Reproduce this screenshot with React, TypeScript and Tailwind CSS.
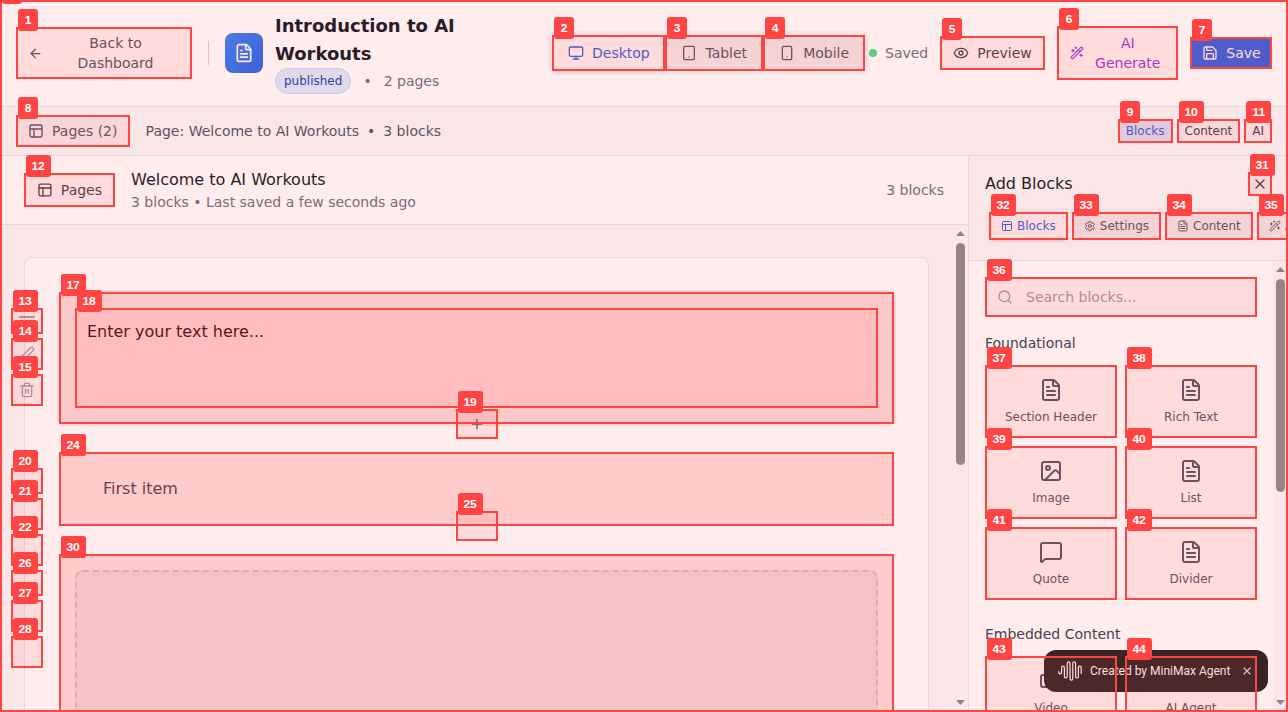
import type { ReactNode } from "react";
import {
  ArrowLeft,
  Bot,
  Eye,
  FileText,
  Image,
  MessageSquare,
  Monitor,
  PanelsTopLeft,
  Pen,
  Plus,
  Save,
  Search,
  Settings,
  Smartphone,
  Tablet,
  Trash2,
  Video,
  WandSparkles,
  X,
} from "lucide-react";

type Mark = [id: number, x: number, y: number, w: number, h: number];

const marks: Mark[] = [
  [0, 0, 0, 1288, 712],
  [1, 16, 27, 176, 52],
  [2, 552, 35, 113, 36],
  [3, 665, 35, 98, 36],
  [4, 763, 35, 102, 36],
  [5, 940, 36, 105, 34],
  [6, 1057, 26, 121, 54],
  [7, 1190, 37, 82, 32],
  [8, 16, 115, 114, 32],
  [9, 1118, 119, 55, 24],
  [10, 1177, 119, 63, 24],
  [11, 1244, 119, 28, 24],
  [12, 24, 173, 91, 34],
  [13, 11, 308, 32, 26],
  [14, 11, 338, 32, 32],
  [15, 11, 374, 32, 32],
  [16, 59, 292, 835, 132],
  [17, 59, 292, 835, 132],
  [18, 75, 308, 803, 100],
  [19, 456, 409, 42, 30],
  [20, 11, 468, 32, 26],
  [21, 11, 498, 32, 32],
  [22, 11, 534, 32, 32],
  [23, 59, 452, 835, 74],
  [24, 59, 452, 835, 74],
  [25, 456, 511, 42, 30],
  [26, 11, 570, 32, 26],
  [27, 11, 600, 32, 32],
  [28, 11, 636, 32, 32],
  [29, 59, 554, 835, 234],
  [30, 59, 554, 835, 234],
  [31, 1248, 172, 24, 24],
  [32, 989, 212, 79, 28],
  [33, 1072, 212, 89, 28],
  [34, 1165, 212, 88, 28],
  [35, 1257, 212, 52, 28],
  [36, 985, 277, 272, 40],
  [37, 985, 365, 132, 73],
  [38, 1125, 365, 132, 73],
  [39, 985, 446, 132, 73],
  [40, 1125, 446, 132, 73],
  [41, 985, 527, 132, 73],
  [42, 1125, 527, 132, 73],
  [43, 985, 656, 132, 73],
  [44, 1125, 656, 132, 73],
];

function Marks() {
  return (
    <div className="pointer-events-none absolute inset-0 z-20 overflow-hidden">
      {marks.map(([id, x, y, w, h]) => (
        <div
          key={id}
          className="absolute border-2 border-[#ff4444] bg-[#ff4444]/10"
          style={{ left: x, top: y, width: w, height: h }}
        >
          <span
            className={`absolute -top-5 left-0 flex h-[22px] items-center justify-center rounded-[3px] bg-[#ff4444] font-['Liberation_Sans',sans-serif] text-[11px] font-bold text-white ${id < 10 ? "w-5" : "w-[25px]"}`}
          >
            <span className="scale-x-110">{id}</span>
          </span>
        </div>
      ))}
    </div>
  );
}

function ScrollTrack({ thumb }: { thumb: string }) {
  return (
    <div className="flex w-[15px] shrink-0 flex-col items-center bg-[#fafafa]">
      <svg className="mt-1.5 shrink-0" width="9" height="5" viewBox="0 0 9 5">
        <path d="M0 5 4.5 0 9 5Z" fill="#8b8b8b" />
      </svg>
      <div className={`mt-[7px] w-[9px] shrink-0 rounded-full bg-[#8b8b8b] ${thumb}`} />
      <svg className="mt-auto mb-[7px] shrink-0" width="9" height="5" viewBox="0 0 9 5">
        <path d="M0 0 4.5 5 9 0Z" fill="#8b8b8b" />
      </svg>
    </div>
  );
}

function Header() {
  return (
    <header className="flex h-[107px] shrink-0 items-center border-b border-gray-200 bg-white px-4">
      <button className="flex w-44 shrink-0 items-center px-3 text-sm text-gray-600">
        <ArrowLeft className="size-[15px] shrink-0" />
        <span className="ml-2 flex-1 px-2 text-center">Back to Dashboard</span>
      </button>
      <div className="ml-4 h-6 w-px shrink-0 bg-gray-300" />
      <div className="ml-4 flex h-10 w-[38px] shrink-0 items-center justify-center rounded-lg bg-linear-to-br from-[#3b82f6] to-[#2563eb] text-white">
        <FileText className="size-5" />
      </div>
      <div className="ml-3 w-[200px] shrink-0">
        <h1 className="text-lg/7 font-bold text-gray-900">Introduction to AI Workouts</h1>
        <div className="flex items-center text-sm text-gray-500">
          <span className="rounded-full border border-[#bfdbfe] bg-[#dbeafe] px-2 py-1 text-xs text-[#1e40af]">
            published
          </span>
          <span className="ml-3">•</span>
          <span className="ml-3">2 pages</span>
        </div>
      </div>
      <div className="ml-[73px] flex shrink-0 rounded-lg bg-gray-100 p-1 text-sm text-gray-600">
        <button className="flex h-9 w-[113px] items-center gap-2 rounded-md bg-white pl-4 text-[#2563eb] shadow-sm">
          <Monitor className="size-4" />
          Desktop
        </button>
        <button className="flex h-9 w-[98px] items-center gap-2 pl-[16.4px]">
          <Tablet className="size-4" />
          Tablet
        </button>
        <button className="flex h-9 w-[102px] items-center gap-2 pl-[16.2px]">
          <Smartphone className="size-4" />
          Mobile
        </button>
      </div>
      <div className="flex flex-1 items-center justify-end text-sm">
        <span className="size-2 rounded-full bg-[#4ade80]" />
        <span className="ml-2 text-gray-500">Saved</span>
        <button className="ml-3 flex h-[34px] w-[105px] items-center gap-2 rounded-md border border-gray-300 px-3 text-gray-700">
          <Eye className="size-4 shrink-0" />
          Preview
        </button>
        <button className="ml-3 flex h-[54px] w-[121px] items-center rounded-md border border-purple-200 px-3 text-[#9333ea]">
          <WandSparkles className="size-3.5 shrink-0" />
          <span className="ml-1.5 flex-1 text-center">AI Generate</span>
        </button>
        <button className="ml-3 flex h-8 w-[82px] items-center gap-2 bg-[#2563eb] pl-3 text-white">
          <Save className="size-4 shrink-0" />
          Save
        </button>
      </div>
    </header>
  );
}

function SubBar() {
  return (
    <div className="flex h-[49px] shrink-0 items-center border-b border-gray-200 bg-gray-50 px-4 text-sm text-gray-600">
      <button className="flex h-8 w-[114px] items-center gap-2 px-3">
        <PanelsTopLeft className="size-4" />
        Pages (2)
      </button>
      <span className="ml-[15.6px]">Page: Welcome to AI Workouts</span>
      <span className="ml-2">•</span>
      <span className="ml-2">3 blocks</span>
      <div className="ml-auto flex gap-1 text-xs text-gray-700">
        <button className="rounded bg-[#dbeafe] px-2 py-1 text-[#2563eb]">Blocks</button>
        <button className="px-2 py-1">Content</button>
        <button className="px-2 py-1">AI</button>
      </div>
    </div>
  );
}

function BlockControls() {
  return (
    <div className="absolute top-4 -left-12 flex w-8 flex-col items-center gap-1 text-gray-400">
      <div className="h-[26px] pt-2">
        <div className="h-0.5 w-4 rounded-full bg-current" />
      </div>
      <div className="flex size-8 items-center justify-center">
        <Pen className="size-4" />
      </div>
      <div className="flex size-8 items-center justify-center">
        <Trash2 className="size-4" />
      </div>
    </div>
  );
}

function Canvas() {
  return (
    <main className="flex w-[968px] shrink-0 flex-col">
      <div className="flex h-[69px] shrink-0 items-center border-b border-gray-200 bg-white px-6">
        <button className="flex h-[34px] w-[91px] items-center gap-2 rounded-md border border-gray-300 px-3 text-sm text-gray-700">
          <PanelsTopLeft className="size-4" />
          Pages
        </button>
        <div className="ml-4">
          <h2 className="text-base text-gray-900">Welcome to AI Workouts</h2>
          <p className="text-sm text-gray-500">3 blocks • Last saved a few seconds ago</p>
        </div>
        <span className="ml-auto text-sm text-gray-500">3 blocks</span>
      </div>
      <div className="flex min-h-0 flex-1 bg-gray-50">
        <div className="min-w-0 flex-1 overflow-hidden px-6 pt-8">
          <div className="flex h-[700px] flex-col gap-6 rounded-lg border border-gray-200 bg-white p-8">
            <section className="relative rounded-lg border-2 border-gray-200 bg-[#fcfcfd] p-4">
              <BlockControls />
              <div className="h-[100px] bg-white p-3 text-base text-black">Enter your text here...</div>
              <Plus className="absolute -bottom-2 left-1/2 size-4 -translate-x-1/2 text-gray-600" />
            </section>
            <section className="rounded-lg border-2 border-transparent p-4">
              <div className="flex h-[42px] items-center pl-7 text-base text-gray-700">First item</div>
            </section>
            <section className="rounded-lg border-2 border-transparent p-4">
              <div className="h-[202px] rounded-lg border-2 border-dashed border-gray-300 bg-gray-100" />
            </section>
          </div>
        </div>
        <ScrollTrack thumb="h-[222px]" />
      </div>
    </main>
  );
}

function BlockCard({ icon, name }: { icon: ReactNode; name: string }) {
  return (
    <button className="flex h-[73px] flex-col items-center gap-[7px] rounded-lg border border-gray-200 pt-3 text-xs text-gray-600">
      {icon}
      {name}
    </button>
  );
}

function Sidebar() {
  return (
    <aside className="flex min-w-0 flex-1 flex-col border-l border-gray-200 bg-white">
      <div className="h-[105px] shrink-0 border-b border-gray-200 bg-gray-50 p-4">
        <div className="flex h-6 items-center justify-between text-base text-gray-900">
          Add Blocks
          <span className="flex size-6 items-center justify-center text-gray-700">
            <X className="size-4" />
          </span>
        </div>
        <div className="mt-3 flex h-9 gap-1 rounded-lg bg-gray-100 p-1 text-xs text-gray-600">
          <button className="flex w-[79px] shrink-0 items-center gap-1 rounded-md bg-white px-3 text-[#2563eb] shadow-sm">
            <PanelsTopLeft className="size-3" />
            Blocks
          </button>
          <button className="flex w-[89px] shrink-0 items-center gap-1 px-3">
            <Settings className="size-3" />
            Settings
          </button>
          <button className="flex w-[88px] shrink-0 items-center gap-1 px-3">
            <FileText className="size-3" />
            Content
          </button>
          <button className="flex w-[52px] shrink-0 items-center gap-1 px-3">
            <WandSparkles className="size-3 shrink-0" />
            AI
          </button>
        </div>
      </div>
      <div className="flex min-h-0 flex-1">
        <div className="flex-1 overflow-hidden p-4">
          <div className="flex h-10 items-center rounded-lg border border-gray-200 pl-[11px] text-sm text-gray-400">
            <Search className="size-4" />
            <span className="ml-[13px]">Search blocks...</span>
          </div>
          <h3 className="mt-4 text-sm text-gray-700">Foundational</h3>
          <div className="mt-3 grid grid-cols-2 gap-2">
            <BlockCard icon={<FileText className="size-6 shrink-0" />} name="Section Header" />
            <BlockCard icon={<FileText className="size-6 shrink-0" />} name="Rich Text" />
            <BlockCard icon={<Image className="size-6 shrink-0" />} name="Image" />
            <BlockCard icon={<FileText className="size-6 shrink-0" />} name="List" />
            <BlockCard icon={<MessageSquare className="size-6 shrink-0" />} name="Quote" />
            <BlockCard icon={<FileText className="size-6 shrink-0" />} name="Divider" />
          </div>
          <h3 className="mt-6 text-sm text-gray-700">Embedded Content</h3>
          <div className="mt-3 grid grid-cols-2 gap-2">
            <BlockCard icon={<Video className="size-6 shrink-0" />} name="Video" />
            <BlockCard icon={<Bot className="size-6 shrink-0" />} name="AI Agent" />
          </div>
        </div>
        <ScrollTrack thumb="h-[213px]" />
      </div>
    </aside>
  );
}

function Toast() {
  return (
    <div className="absolute right-5 bottom-5 z-10 flex h-[42px] w-56 items-center rounded-xl bg-[#222] pl-3.5 font-['Roboto',sans-serif] text-xs text-white">
      <svg
        width="24"
        height="20"
        viewBox="0 0 24 20"
        fill="none"
        stroke="currentColor"
        strokeWidth="1.2"
        strokeLinecap="round"
      >
        <path d="M.8 10.500v1a1.400 1.400 0 0 0 2.800 0V6.500a1.400 1.400 0 0 1 2.800 0v9a1.400 1.400 0 0 0 2.800 0V2.300a1.400 1.400 0 0 1 2.800 0v15.400a1.400 1.400 0 0 0 2.800 0V2.300a1.400 1.400 0 0 1 2.800 0v13.200a1.400 1.400 0 0 0 2.800 0v-9a1.400 1.400 0 0 1 2.800 0v6" />
      </svg>
      <span className="ml-2 whitespace-nowrap">Created by MiniMax Agent</span>
      <X className="mr-[15px] ml-auto size-3 text-gray-300" strokeWidth={2.5} />
    </div>
  );
}

export default function App() {
  return (
    <div className="relative flex h-[712px] w-[1288px] flex-col overflow-hidden bg-white font-['DejaVu_Sans',sans-serif]">
      <Header />
      <SubBar />
      <div className="flex min-h-0 flex-1">
        <Canvas />
        <Sidebar />
      </div>
      <Toast />
      <Marks />
    </div>
  );
}
